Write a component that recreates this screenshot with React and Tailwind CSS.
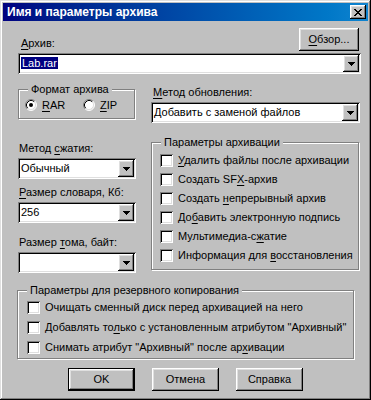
import React from 'react'

const raised =
  'bg-[#c0c0c0] shadow-[inset_-1px_-1px_#000,inset_1px_1px_#fff,inset_-2px_-2px_#808080,inset_2px_2px_#dfdfdf]'
const sunken =
  'bg-white shadow-[inset_1px_1px_#808080,inset_-1px_-1px_#fff,inset_2px_2px_#000,inset_-2px_-2px_#dfdfdf]'

function U({ children }) {
  return <span className="underline underline-offset-[2px] decoration-1">{children}</span>
}

function CloseGlyph() {
  return (
    <svg width="8" height="7" viewBox="0 0 8 7" shapeRendering="crispEdges" fill="#000">
      <path d="M0 0h2v1H0zM6 0h2v1H6zM1 1h2v1H1zM5 1h2v1H5zM2 2h4v1H2zM3 3h2v1H3zM2 4h4v1H2zM1 5h2v1H1zM5 5h2v1H5zM0 6h2v1H0zM6 6h2v1H6z" />
    </svg>
  )
}

function Arrow() {
  return (
    <svg width="7" height="4" viewBox="0 0 7 4" shapeRendering="crispEdges" fill="#000">
      <path d="M0 0h7v1H0zM1 1h5v1H1zM2 2h3v1H2zM3 3h1v1H3z" />
    </svg>
  )
}

function Radio({ checked }) {
  return (
    <svg width="12" height="12" viewBox="0 0 12 12" className="shrink-0">
      <circle cx="6" cy="6" r="5" fill="#fff" />
      <path d="M2.11 9.89A5.5 5.5 0 0 1 9.89 2.11" stroke="#808080" fill="none" />
      <path d="M9.89 2.11A5.5 5.5 0 0 1 2.11 9.89" stroke="#fff" fill="none" />
      <path d="M2.82 9.18A4.5 4.5 0 0 1 9.18 2.82" stroke="#000" fill="none" />
      <path d="M9.18 2.82A4.5 4.5 0 0 1 2.82 9.18" stroke="#dfdfdf" fill="none" />
      {checked && <circle cx="6" cy="6" r="2" fill="#000" />}
    </svg>
  )
}

function Combo({ className, children }) {
  return (
    <div className={`flex h-[21px] items-center p-[2px] ${sunken} ${className}`}>
      <div className="flex-1 pl-[1px] whitespace-nowrap overflow-hidden">{children}</div>
      <div className={`w-[16px] h-[17px] flex items-center justify-center ${raised}`}>
        <Arrow />
      </div>
    </div>
  )
}

function Group({ title, className, children }) {
  return (
    <div className={`relative border border-[#808080] shadow-[inset_1px_1px_#fff,1px_1px_#fff] ${className}`}>
      <span className="absolute -top-[7px] left-[9px] bg-[#c0c0c0] px-[3px] whitespace-nowrap">{title}</span>
      {children}
    </div>
  )
}

function Check({ className, children }) {
  return (
    <div className={`flex items-center gap-[5px] whitespace-nowrap ${className}`}>
      <span className={`w-[13px] h-[13px] shrink-0 ${sunken}`} />
      <span>{children}</span>
    </div>
  )
}

function Button({ className, children }) {
  return (
    <button type="button" className={`flex items-center justify-center ${raised} ${className}`}>
      {children}
    </button>
  )
}

export default function App() {
  return (
    <div className="w-[371px] h-[400px] bg-[#c0c0c0] p-[3px] flex flex-col font-['Liberation_Sans',Arial,sans-serif] text-[11px] leading-[13px] text-black shadow-[inset_-1px_-1px_#000,inset_1px_1px_#dfdfdf,inset_-2px_-2px_#808080,inset_2px_2px_#fff]">
      {/* Title bar */}
      <div className="h-[18px] flex items-center justify-between bg-linear-to-r from-[#000080] to-[#1084d0] pl-[4px] pr-[2px]">
        <span className="text-white font-bold text-[12px]">Имя и параметры архива</span>
        <button type="button" className={`w-[16px] h-[14px] flex items-center justify-center ${raised}`}>
          <CloseGlyph />
        </button>
      </div>

      <div className="flex flex-col pl-[15px] pt-[7px]">
        {/* Archive name */}
        <div className="flex items-end justify-between w-[341px]">
          <span className="pl-[3px] mb-[1px]">
            <U>А</U>рхив:
          </span>
          <Button className="w-[60px] h-[23px]">
            <U>О</U>бзор...
          </Button>
        </div>
        <Combo className="mt-[2px] w-[343px]">
          <span className="bg-[#000080] text-white px-[1px]">Lab.rar</span>
        </Combo>

        {/* Two columns */}
        <div className="flex mt-[10px]">
          <div className="flex flex-col w-[118px]">
            <Group title="Формат архива" className="mt-[5px] w-[117px] h-[30px] flex items-center pt-[2px] pl-[6px]">
              <div className="flex items-center gap-[5px] w-[58px]">
                <Radio checked />
                <span>
                  <U>R</U>AR
                </span>
              </div>
              <div className="flex items-center gap-[5px]">
                <Radio />
                <span>
                  <U>Z</U>IP
                </span>
              </div>
            </Group>

            <span className="mt-[23px] pl-[1px]">
              Метод <U>с</U>жатия:
            </span>
            <Combo className="mt-[3px] w-[118px]">Обычный</Combo>

            <span className="mt-[7px] pl-[1px]">
              <U>Р</U>азмер словаря, Кб:
            </span>
            <Combo className="mt-[3px] w-[118px]">256</Combo>

            <span className="mt-[13px] pl-[1px]">
              Размер <U>т</U>ома, байт:
            </span>
            <Combo className="mt-[3px] w-[118px]"></Combo>
          </div>

          <div className="flex flex-col ml-[15px] w-[209px]">
            <span className="mt-[2px] pl-[2px]">
              <U>М</U>етод обновления:
            </span>
            <Combo className="mt-[3px] w-[209px]">Добавить с заменой файлов</Combo>

            <Group title="Параметры архивации" className="mt-[19px] w-[208px] h-[128px] pt-[8px] pl-[8px] flex flex-col">
              <Check className="h-[19px]">
                <U>У</U>далить файлы после архивации
              </Check>
              <Check className="h-[19px]">
                Создать SF<U>X</U>-архив
              </Check>
              <Check className="h-[19px]">
                Создать <U>н</U>епрерывный архив
              </Check>
              <Check className="h-[19px]">
                До<U>б</U>авить электронную подпись
              </Check>
              <Check className="h-[19px]">
                Мультимедиа-с<U>ж</U>атие
              </Check>
              <Check className="h-[19px]">
                Информация для <U>в</U>осстановления
              </Check>
            </Group>
          </div>
        </div>

        {/* Backup options */}
        <Group title="Параметры для резервного копирования" className="mt-[17px] -ml-[1px] w-[337px] h-[69px] pt-[6px] pl-[9px] flex flex-col">
          <Check className="h-[20px]">Очищать сменный диск перед архивацией на него</Check>
          <Check className="h-[20px]">
            Добавлять то<U>л</U>ько с установленным атрибутом "Архивный"
          </Check>
          <Check className="h-[20px]">
            Снимать атрибут "Архивный" после ар<U>х</U>ивации
          </Check>
        </Group>

        {/* Buttons */}
        <div className="flex justify-center gap-[17px] mt-[9px] pr-[15px]">
          <Button className="w-[67px] h-[23px] border border-black">OK</Button>
          <Button className="w-[67px] h-[23px]">Отмена</Button>
          <Button className="w-[67px] h-[23px]">Справка</Button>
        </div>
      </div>
    </div>
  )
}
